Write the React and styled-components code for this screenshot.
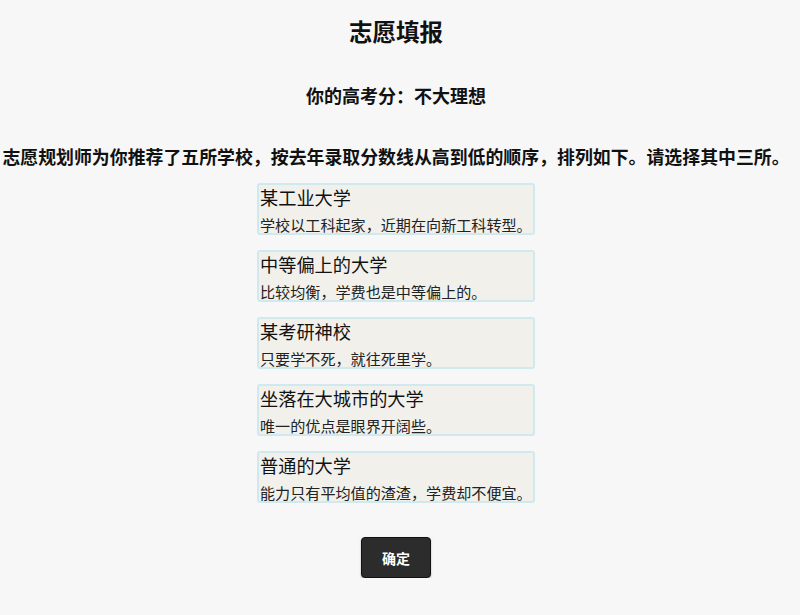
import React, { useState } from "react"
import styled, { createGlobalStyle } from "styled-components"

const GlobalStyle = createGlobalStyle`
  html, body {
    margin: 0;
    padding: 0;
    background: #f7f7f7;
  }
  body {
    font-family: "Noto Sans CJK SC", "Noto Sans", sans-serif;
    color: #111;
  }
`

const Page = styled.div`
  display: flex;
  flex-direction: column;
  align-items: center;
  padding: 13px 8px 0 0;
`
const Title = styled.h1`
  margin: 0;
  font-size: 23.5px;
  line-height: 36px;
  font-weight: 700;
`
const Score = styled.h2`
  margin: 33px 0 0;
  font-size: 18px;
  line-height: 26px;
  font-weight: 700;
`
const Intro = styled.p`
  margin: 35px 0 0;
  font-size: 17.9px;
  line-height: 26px;
  font-weight: 700;
  white-space: nowrap;
`
const SchoolList = styled.ul`
  list-style: none;
  margin: 14px 0 0;
  padding: 0;
  display: flex;
  flex-direction: column;
  gap: 15px;
`
const SchoolCard = styled.li`
  width: 272px;
  padding: 0 1px;
  border: 2px solid ${p => (p.$picked ? "#7fc4d8" : "#d0e9ef")};
  border-radius: 3px;
  background: ${p => (p.$picked ? "#e6f2f5" : "#f1f0eb")};
  cursor: pointer;
`
const SchoolName = styled.div`
  font-size: 18.2px;
  line-height: 24px;
`
const SchoolNote = styled.div`
  margin-top: 6px;
  font-size: 15.1px;
  line-height: 18px;
  white-space: nowrap;
  color: #222;
`
const ConfirmButton = styled.button`
  margin-top: 34px;
  width: 70px;
  height: 41px;
  border: 1px solid #111;
  border-radius: 4px;
  background: #2c2c2c;
  color: #fff;
  font-family: inherit;
  font-size: 14px;
  font-weight: 700;
  box-shadow: 0 1px 2px rgba(0, 0, 0, 0.3);
`

const schools = [
  { name: "某工业大学", note: "学校以工科起家，近期在向新工科转型。" },
  { name: "中等偏上的大学", note: "比较均衡，学费也是中等偏上的。" },
  { name: "某考研神校", note: "只要学不死，就往死里学。" },
  { name: "坐落在大城市的大学", note: "唯一的优点是眼界开阔些。" },
  { name: "普通的大学", note: "能力只有平均值的渣渣，学费却不便宜。" },
]

export default function App() {
  const [picked, setPicked] = useState([])
  const toggle = i =>
    setPicked(p => (p.includes(i) ? p.filter(x => x !== i) : p.length < 3 ? [...p, i] : p))

  return (
    <>
      <GlobalStyle />
      <Page>
        <Title>志愿填报</Title>
        <Score>你的高考分：不大理想</Score>
        <Intro>志愿规划师为你推荐了五所学校，按去年录取分数线从高到低的顺序，排列如下。请选择其中三所。</Intro>
        <SchoolList>
          {schools.map((s, i) => (
            <SchoolCard key={s.name} $picked={picked.includes(i)} onClick={() => toggle(i)}>
              <SchoolName>{s.name}</SchoolName>
              <SchoolNote>{s.note}</SchoolNote>
            </SchoolCard>
          ))}
        </SchoolList>
        <ConfirmButton>确定</ConfirmButton>
      </Page>
    </>
  )
}
